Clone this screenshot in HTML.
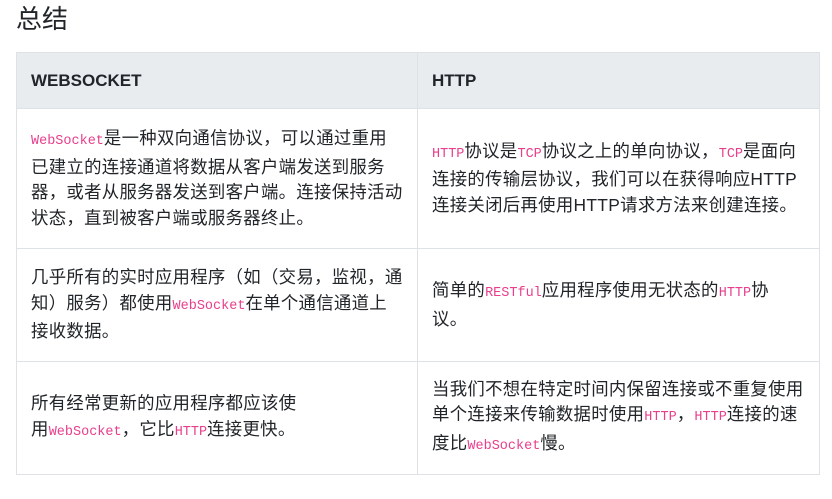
<!DOCTYPE html>
<html><head><meta charset="utf-8"><style>
body{margin:0;background:#fff;width:832px;height:499px;overflow:hidden;font-family:"Liberation Sans","Noto Sans CJK SC",sans-serif;color:#212529;}
h2{position:absolute;left:16px;top:1px;margin:0;font-weight:400;font-size:26px;line-height:36px;}
table{position:absolute;left:16px;top:52px;border-collapse:collapse;width:803px;table-layout:fixed;}
td,th{border:1px solid #dee2e6;padding:0 4px 0 14px;vertical-align:middle;font-size:17.4px;line-height:25.5px;text-align:left;white-space:nowrap;}
td{letter-spacing:0.3px;}
th{background:#e9ecef;font-weight:700;font-size:17px;height:55px;}
code{font-family:"Liberation Mono",monospace;font-size:13.5px;color:#e83e8c;letter-spacing:0;}
</style></head><body>
<h2>总结</h2>
<table>
<colgroup><col style="width:401px"><col style="width:402px"></colgroup>
<tr><th>WEBSOCKET</th><th>HTTP</th></tr>
<tr style="height:140px"><td><code>WebSocket</code>是一种双向通信协议，可以通过重用<br>已建立的连接通道将数据从客户端发送到服务<br>器，或者从服务器发送到客户端。连接保持活动<br>状态，直到被客户端或服务器终止。</td>
<td><code>HTTP</code>协议是<code>TCP</code>协议之上的单向协议，<code>TCP</code>是面向<br>连接的传输层协议，我们可以在获得响应HTTP<br>连接关闭后再使用HTTP请求方法来创建连接。</td></tr>
<tr style="height:113px"><td>几乎所有的实时应用程序（如（交易，监视，通<br>知）服务）都使用<code>WebSocket</code>在单个通信通道上<br>接收数据。</td>
<td>简单的<code>RESTful</code>应用程序使用无状态的<code>HTTP</code>协<br>议。</td></tr>
<tr style="height:113px"><td>所有经常更新的应用程序都应该使<br>用<code>WebSocket</code>，它比<code>HTTP</code>连接更快。</td>
<td>当我们不想在特定时间内保留连接或不重复使用<br>单个连接来传输数据时使用<code>HTTP</code>，<code>HTTP</code>连接的速<br>度比<code>WebSocket</code>慢。</td></tr>
</table>
</body></html>
